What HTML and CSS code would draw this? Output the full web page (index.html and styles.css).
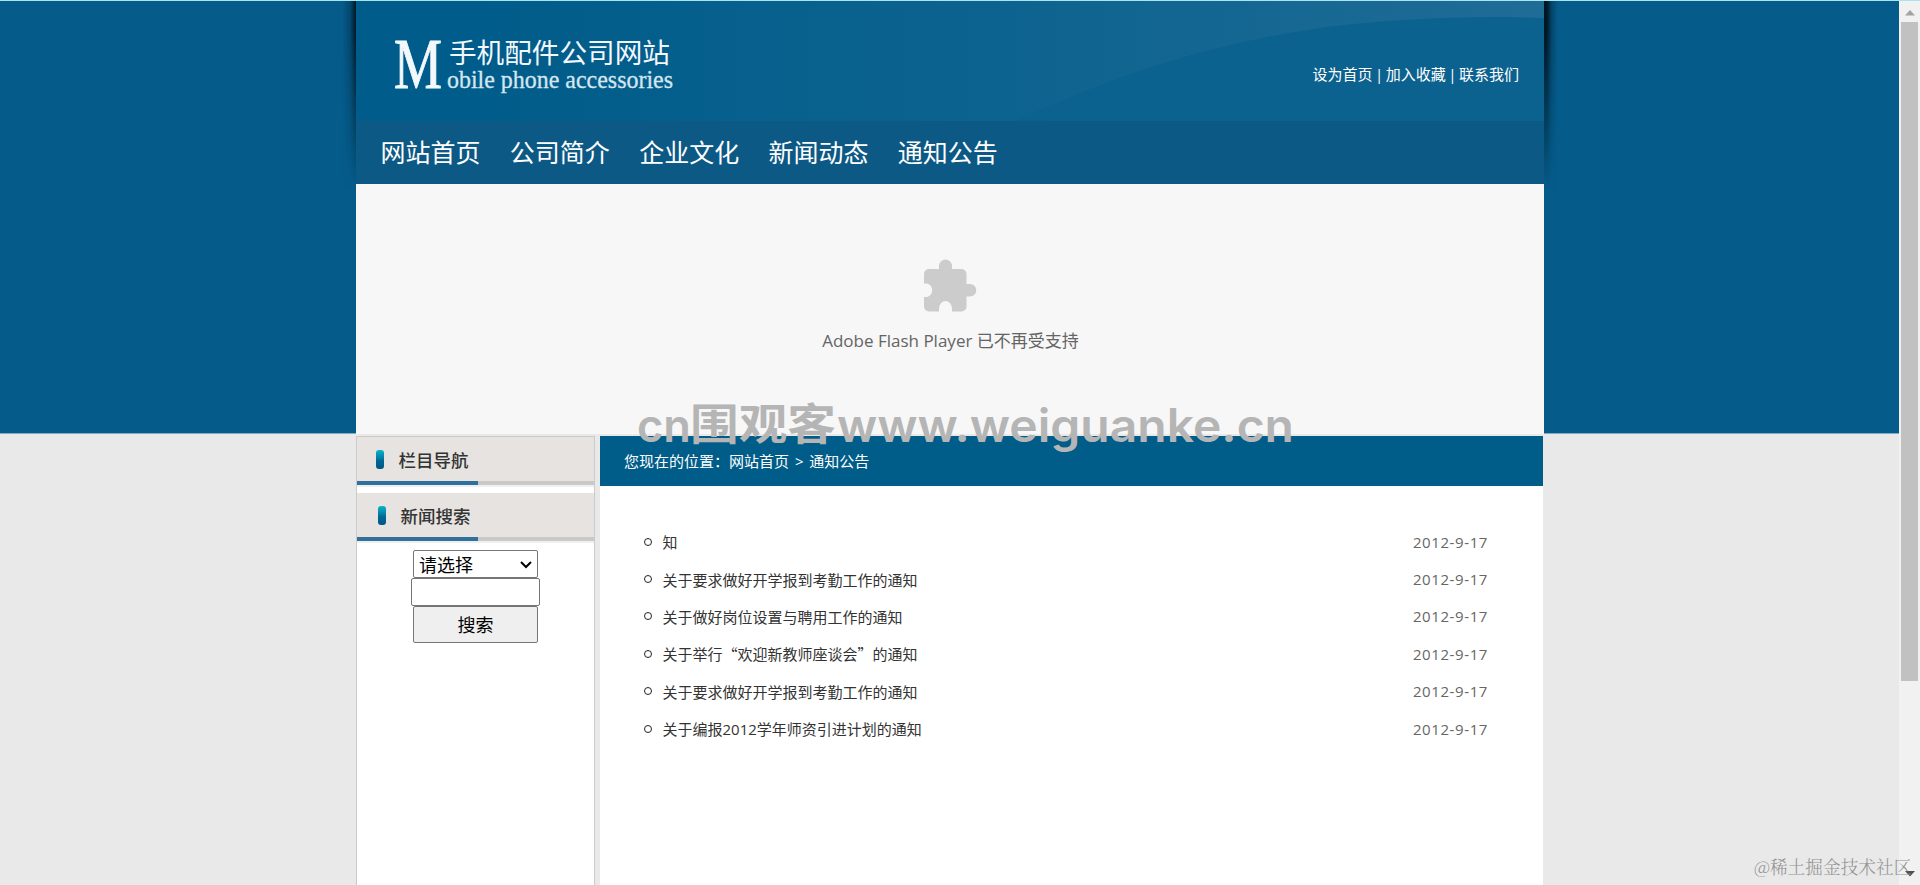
FILE: index.html
```html
<!DOCTYPE html>
<html lang="zh-CN">
<head>
<meta charset="UTF-8">
<title>手机配件公司网站</title>
<link rel="stylesheet" href="styles.css">
</head>
<body>
<div class="page">
    <div class="wrap">
        <div class="header">
            <svg class="header-bg" width="1188" height="120" viewBox="0 0 1188 120">
                <defs>
                    <linearGradient id="swoosh" x1="0" x2="1" y1="0" y2="0">
                        <stop offset="0.1" stop-color="#005c8a"/>
                        <stop offset="0.55" stop-color="#0d638f"/>
                        <stop offset="1" stop-color="#1f6c97"/>
                    </linearGradient>
                </defs>
                <path d="M0 0H1188V17C1110 14 1040 18 970 26C850 43 760 74 659 120H0Z" fill="url(#swoosh)"/>
            </svg>
            <svg class="logo" width="290" height="80" viewBox="0 0 290 80">
                <text class="logo-m" x="0" y="55" textLength="48" lengthAdjust="spacingAndGlyphs">M</text>
                <text class="logo-cn" x="55" y="30" textLength="221" lengthAdjust="spacingAndGlyphs">手机配件公司网站</text>
                <text class="logo-en" x="53" y="55" textLength="226" lengthAdjust="spacingAndGlyphs">obile phone accessories</text>
            </svg>
            <div class="top-links"><a>设为首页</a> | <a>加入收藏</a> | <a>联系我们</a></div>
        </div>
        <div class="nav">
            <a>网站首页</a>
            <a>公司简介</a>
            <a>企业文化</a>
            <a>新闻动态</a>
            <a>通知公告</a>
        </div>
        <div class="flash">
            <svg width="53" height="53" viewBox="0 0 53 53">
                <path d="M5 10H15V7A6.5 6.5 0 0 1 28 7V10H37.500A5 5 0 0 1 42.500 15V25H46A6.200 6.200 0 0 1 46 37.500H42.500V47.500A5 5 0 0 1 37.500 52.500H28V50A6.500 8 0 0 0 15 50V52.500H5A5 5 0 0 1 0 47.500V38H3A7 7 0 0 0 3 24.500H0V15A5 5 0 0 1 5 10Z" fill="#ccc"/>
            </svg>
            <p>Adobe Flash Player 已不再受支持</p>
        </div>
        <div class="main">
            <div class="side">
                <h3 class="side-title"><i></i>栏目导航</h3>
                <h3 class="side-title search-title"><i></i>新闻搜索</h3>
                <form class="search">
                    <div class="select-box">
                        <select><option>请选择</option></select>
                        <svg width="12" height="8" viewBox="0 0 12 8"><path d="M1 1L6 6L11 1" fill="none" stroke="#000" stroke-width="2"/></svg>
                    </div>
                    <input type="text">
                    <button type="button">搜索</button>
                </form>
            </div>
            <div class="content">
                <div class="position">您现在的位置：网站首页 &gt; 通知公告</div>
                <ul class="news">
                    <li><a>知</a><span>2012-9-17</span></li>
                    <li><a>关于要求做好开学报到考勤工作的通知</a><span>2012-9-17</span></li>
                    <li><a>关于做好岗位设置与聘用工作的通知</a><span>2012-9-17</span></li>
                    <li><a class="quoted">关于举行“欢迎新教师座谈会”的通知</a><span>2012-9-17</span></li>
                    <li><a>关于要求做好开学报到考勤工作的通知</a><span>2012-9-17</span></li>
                    <li><a>关于编报2012学年师资引进计划的通知</a><span>2012-9-17</span></li>
                </ul>
            </div>
        </div>
    </div>
</div>
<div class="scrollbar">
    <svg width="10" height="6" viewBox="0 0 10 6"><path d="M0 5.500L5 0L10 5.500Z" fill="#a3a3a3"/></svg>
    <div class="thumb"></div>
    <svg class="down" width="10" height="6" viewBox="0 0 10 6"><path d="M0 0L5 5.500L10 0Z" fill="#505050"/></svg>
</div>
<svg class="site-mark" width="670" height="70" viewBox="0 0 670 70">
    <text x="1" y="42" textLength="54" lengthAdjust="spacingAndGlyphs">cn</text>
    <text class="mark-cn" x="54" y="40" textLength="146" lengthAdjust="spacingAndGlyphs">围观客</text>
    <text x="201" y="42" textLength="457" lengthAdjust="spacingAndGlyphs">www.weiguanke.cn</text>
</svg>
<div class="community">@稀土掘金技术社区</div>
</body>
</html>
```
FILE: styles.css
```css
* {
    box-sizing: border-box;
}
body {
    margin: 0;
    height: 885px;
    display: flex;
    position: relative;
    overflow: hidden;
    border-top: 1px solid #a9e4f2;
    background: #e9e9e9;
    font-family: "Open Sans", "Noto Sans CJK SC", sans-serif;
    font-size: 15px;
    color: #333;
}
.page {
    width: 1899px;
    height: 884px;
    padding-left: 356px;
    background: linear-gradient(#055c8b 432px, #80abc4 432px, #80abc4 433px, #e9e9e9 433px);
}
.wrap {
    width: 1188px;
    position: relative;
}
/* shadows on both sides of the header */
.wrap::before,
.wrap::after {
    content: "";
    position: absolute;
    top: 0;
    width: 14px;
    height: 190px;
}
.wrap::before {
    left: -14px;
    background: linear-gradient(to left, rgba(0, 15, 25, 0.9), rgba(0, 30, 50, 0.35) 40%, transparent);
    -webkit-mask-image: linear-gradient(#000 15%, transparent);
    mask-image: linear-gradient(#000 15%, transparent);
}
.wrap::after {
    right: -14px;
    background: linear-gradient(to right, rgba(0, 15, 25, 0.9) 20%, rgba(0, 30, 50, 0.35) 55%, transparent);
    -webkit-mask-image: linear-gradient(#000 15%, transparent);
    mask-image: linear-gradient(#000 15%, transparent);
}
.header {
    height: 120px;
    display: flex;
    justify-content: space-between;
    align-items: flex-start;
    padding: 32px 25px 0 38px;
    position: relative;
    background: linear-gradient(to right, #005c8a, #0b628f 60%);
    color: #fff;
}
.header-bg {
    position: absolute;
    left: 0;
    top: 0;
}
.logo {
    position: relative;
    overflow: visible;
    fill: #f2f8fc;
}
.logo-m {
    font: 71px "Liberation Serif", serif;
    stroke: #f2f8fc;
}
.logo-cn {
    font: 27px "Noto Sans CJK SC", sans-serif;
}
.logo-en {
    font: 24.500px "Liberation Serif", serif;
    fill: #d5e6f0;
    stroke: #d5e6f0;
    stroke-width: 0.300px;
}
.top-links {
    position: relative;
    margin-top: 30px;
    line-height: 22px;
    word-spacing: -1.400px;
    white-space: nowrap;
}
.nav {
    height: 63px;
    display: flex;
    gap: 29.300px;
    padding-left: 24.500px;
    background: #0d5985;
    color: #fff;
    font-size: 25px;
    line-height: 62px;
}
.flash {
    height: 250px;
    background: #f7f7f7;
    display: flex;
    flex-direction: column;
    align-items: center;
    padding: 75px 0 0 1px;
    color: #646464;
}
.flash p {
    margin: 16px 0 0;
    font-size: 17px;
    line-height: 26px;
    white-space: nowrap;
}
.main {
    display: flex;
    gap: 5px;
    width: 1187px;
    height: 451px;
    padding-top: 2px;
}
.side {
    width: 239px;
    border: 1px solid #cbcbcb;
    border-width: 1px 1px 0;
    background: #fff;
}
.side-title {
    display: flex;
    align-items: center;
    height: 48px;
    margin: 0 0 8px;
    padding: 0 0 4px 19px;
    background: linear-gradient(to right, #30709a 121px, #cac9c8 121px) bottom / 100% 4px no-repeat, #e6e3e1;
    box-shadow: 0 2px #f0f0f0;
    font-size: 17.500px;
    font-weight: 500;
    color: #333;
}
.side-title i {
    width: 8px;
    height: 19px;
    margin-right: 14.500px;
    border-radius: 3px;
    background: linear-gradient(#09b6cc, #006592 60%, #005887);
}
.search-title {
    padding-left: 21px;
}
.search {
    display: flex;
    flex-direction: column;
    align-items: center;
    margin-top: 9px;
}
.select-box {
    position: relative;
    width: 125px;
    height: 28px;
}
.select-box svg {
    position: absolute;
    right: 6px;
    top: 11px;
}
.search select,
.search input,
.search button {
    display: block;
    width: 125px;
    height: 28px;
    margin: 0;
    border: 1px solid #767676;
    border-radius: 2px;
    background: #fff;
    color: #000;
    font: 18px "Noto Sans CJK SC", sans-serif;
    line-height: 25px;
}
.search select {
    appearance: none;
    padding: 0 5px;
}
.search input {
    width: 129px;
}
.search button {
    height: 37px;
    padding: 0;
    background: #efefef;
}
.content {
    flex: 1;
    background: #fff;
}
.position {
    height: 50px;
    padding-left: 24px;
    background: #005c88;
    color: #fff;
    line-height: 51px;
    word-spacing: 2px;
}
.news {
    list-style: none;
    margin: 37px 0 0;
    padding: 0 56px 0 44px;
}
.news li {
    display: flex;
    align-items: center;
    height: 37.400px;
}
.news li::before {
    content: "";
    width: 6px;
    height: 6px;
    margin-right: 10.500px;
    border: 1px solid #222;
    border-radius: 50%;
}
.news .quoted {
    font-family: "Noto Sans CJK SC", sans-serif;
}
.news span {
    margin-left: auto;
    margin-right: -1px;
    color: #666;
    letter-spacing: 0.600px;
}
.scrollbar {
    width: 21px;
    height: 884px;
    display: flex;
    flex-direction: column;
    align-items: center;
    padding-top: 9px;
    background: #f1f1f1;
}
.thumb {
    width: 17px;
    height: 659px;
    margin-top: 6px;
    background: #c1c1c1;
}
.scrollbar .down {
    margin: auto 0 8px;
}
/* watermarks */
.site-mark {
    position: absolute;
    left: 636px;
    top: 399px;
    overflow: visible;
    fill: #b5b5b5;
    font: 600 46px Inter, sans-serif;
}
.site-mark .mark-cn {
    font: 700 43px "Noto Sans CJK SC", sans-serif;
}
.community {
    position: absolute;
    left: 1754px;
    top: 853px;
    color: #929292;
    font: 300 17.700px/26px "Noto Serif CJK SC", "Noto Sans CJK SC", serif;
    white-space: nowrap;
}
```
